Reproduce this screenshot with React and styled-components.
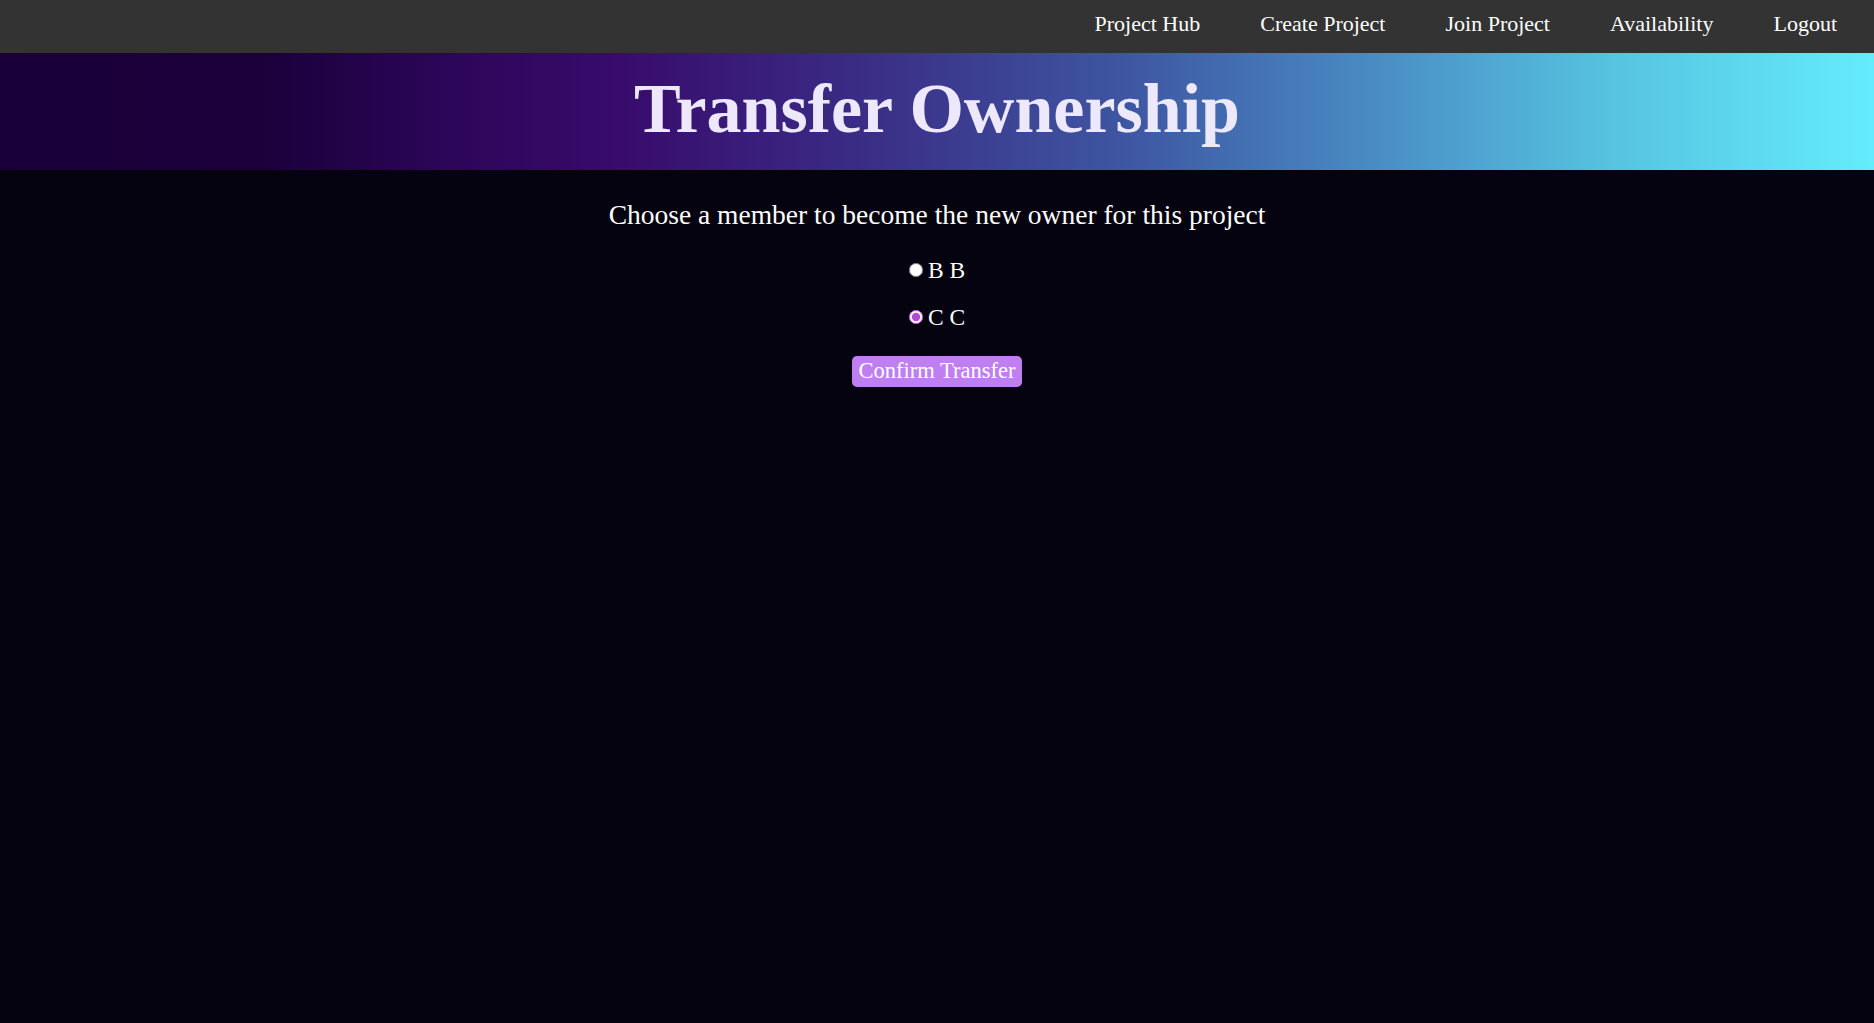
import React, { useState } from "react";
import styled, { createGlobalStyle } from "styled-components";

const Global = createGlobalStyle`
  html, body { margin: 0; padding: 0; }
  body {
    background: #05030f;
    font-family: "Liberation Serif", "Times New Roman", serif;
    color: #ffffff;
    min-height: 100vh;
  }
`;

const Page = styled.div`
  min-height: 100vh;
  background: #05030f;
`;

const NavBar = styled.nav`
  height: 53px;
  background: #333333;
  display: flex;
  justify-content: flex-end;
  align-items: center;
  padding-right: 37px;
  padding-bottom: 5px;
  box-sizing: border-box;
  gap: 60px;
`;

const NavLink = styled.a`
  color: #ffffff;
  font-size: 22px;
  text-decoration: none;
  cursor: pointer;
`;

const Banner = styled.header`
  height: 117px;
  display: flex;
  align-items: center;
  justify-content: center;
  background: linear-gradient(
    90deg,
    #1a003a 0%,
    #1b003b 14%,
    #2c0659 24%,
    #380b6c 33%,
    #3a2a84 45%,
    #3e56a2 60%,
    #4a8fc6 74%,
    #56c3e0 86%,
    #64ecfc 100%
  );
`;

const Title = styled.h1`
  margin: 0;
  font-size: 70px;
  font-weight: bold;
  color: #eee8fc;
  line-height: 1;
  padding-bottom: 6px;
`;

const Content = styled.main`
  display: flex;
  flex-direction: column;
  align-items: center;
  padding-top: 28px;
`;

const Subtitle = styled.p`
  margin: 0 0 25px;
  font-size: 27.5px;
  line-height: 34px;
`;

const OptionRow = styled.label`
  display: flex;
  align-items: center;
  gap: 5px;
  font-size: 23.5px;
  line-height: 26px;
  margin-bottom: 21px;
  cursor: pointer;
`;

const Radio = styled.input`
  margin: 0;
  width: 14px;
  height: 14px;
  accent-color: #b04cd0;
`;

const ConfirmButton = styled.button`
  font-family: "Liberation Serif", "Times New Roman", serif;
  font-size: 22.5px;
  color: #ffffff;
  background: #c07ff0;
  border: none;
  border-radius: 5px;
  padding: 2px 7px 3px;
  margin-top: 5px;
  cursor: pointer;
`;

const members = ["B B", "C C"];

export default function App() {
  const [selected, setSelected] = useState("C C");
  return (
    <Page>
      <Global />
      <NavBar>
        <NavLink>Project Hub</NavLink>
        <NavLink>Create Project</NavLink>
        <NavLink>Join Project</NavLink>
        <NavLink>Availability</NavLink>
        <NavLink>Logout</NavLink>
      </NavBar>
      <Banner>
        <Title>Transfer Ownership</Title>
      </Banner>
      <Content>
        <Subtitle>Choose a member to become the new owner for this project</Subtitle>
        {members.map((m) => (
          <OptionRow key={m}>
            <Radio
              type="radio"
              name="owner"
              checked={selected === m}
              onChange={() => setSelected(m)}
            />
            {m}
          </OptionRow>
        ))}
        <ConfirmButton>Confirm Transfer</ConfirmButton>
      </Content>
    </Page>
  );
}
